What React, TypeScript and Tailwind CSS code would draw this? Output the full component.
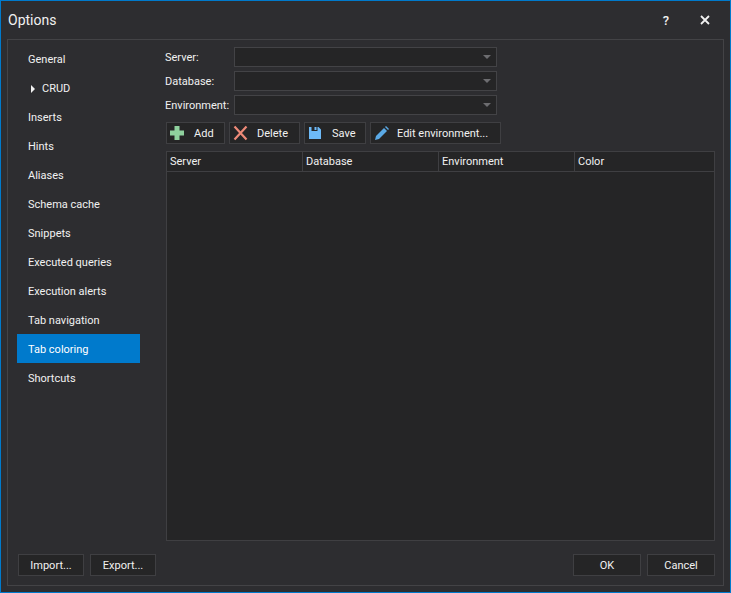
import React from 'react';

const navItems = ['General', 'CRUD', 'Inserts', 'Hints', 'Aliases', 'Schema cache', 'Snippets', 'Executed queries', 'Execution alerts', 'Tab navigation', 'Tab coloring', 'Shortcuts'];

const AddIcon = () => (
  <svg width="16" height="16" viewBox="0 0 16 16"><path d="M5.500 1h5v4.500h4.500v5h-4.500v4.500h-5v-4.500h-4.500v-5h4.500z" fill="#8fd19e" transform="translate(-1 0)" /></svg>
);
const DeleteIcon = () => (
  <svg width="16" height="16" viewBox="0 0 16 16"><path d="M1.500 1.500l12 13M13.500 1.500L1.500 14.500" stroke="#ee8a78" strokeWidth="2.200" fill="none" /></svg>
);
const SaveIcon = () => (
  <svg width="14" height="14" viewBox="0 0 14 14"><path d="M1 1h2.500v4h6v-4h1l2.500 2.500v9.500h-12z" fill="#6db9f7" /><path d="M6.500 1h2v3h-2z" fill="#6db9f7" /></svg>
);
const EditIcon = () => (
  <svg width="16" height="16" viewBox="0 0 16 16"><path d="M1 15l1-4 8-8 3 3-8 8z" fill="#5aa9e6" /><path d="M11 2l1-1 3 3-1 1z" fill="#5aa9e6" /></svg>
);

const Combo = ({ label }: { label: string }) => (
  <div className="flex items-center h-5">
    <span className="w-[69px] shrink-0">{label}</span>
    <div className="w-[263px] h-5 bg-[#252526] border border-[#434346] flex items-center justify-end pr-[5px]">
      <div className="w-0 h-0 border-l-[4px] border-r-[4px] border-t-[4px] border-l-transparent border-r-transparent border-t-[#6d6d70]" />
    </div>
  </div>
);

const ToolButton = ({ icon, label, w, gap }: { icon: React.ReactNode; label: string; w: string; gap: string }) => (
  <button className={`${w} h-[22px] bg-[#252526] border border-[#3f3f42] flex items-center pl-[3px] ${gap}`}>
    {icon}
    <span>{label}</span>
  </button>
);

const App: React.FC = () => {
  return (
    <div className="w-[731px] h-[593px] bg-[#2d2d30] border border-[#007acc] flex flex-col text-[#f1f1f1] text-[11px] leading-none font-['Roboto','Open_Sans',sans-serif]">
      {/* title */}
      <div className="h-[38px] shrink-0 flex items-center pl-[7px] pr-[20px]">
        <span className="text-[14px] flex-1">Options</span>
        <span className="text-[13px] font-medium mr-[31px]">?</span>
        <svg width="10" height="10" viewBox="0 0 10 10"><path d="M1 1l8 8M9 1l-8 8" stroke="#f1f1f1" strokeWidth="1.800" fill="none" /></svg>
      </div>

      <div className="w-[717px] h-[547px] ml-[6px] border border-[#434346] flex flex-col">
        <div className="flex flex-1 min-h-0">
          {/* nav */}
          <div className="w-[123px] ml-[9px] mt-[4px] shrink-0">
            {navItems.map(item => (
              <div key={item} className={`h-[29px] pt-[2px] flex items-center ${item === 'Tab coloring' ? 'bg-[#007acc] text-white' : ''} ${item === 'CRUD' ? 'pl-[14px]' : 'pl-[11px]'}`}>
                {item === 'CRUD' && <span className="w-0 h-0 mr-[7px] border-t-[4px] border-b-[4px] border-l-[4px] border-t-transparent border-b-transparent border-l-[#f1f1f1]" />}
                {item}
              </div>
            ))}
          </div>

          {/* content */}
          <div className="flex-1 ml-[25px] mr-[8px] pt-[7px] flex flex-col min-w-0">
            <div className="flex flex-col gap-1">
              <Combo label="Server:" />
              <Combo label="Database:" />
              <Combo label="Environment:" />
            </div>

            <div className="flex gap-1 mt-[7px] ml-px">
              <ToolButton icon={<AddIcon />} label="Add" w="w-[59px]" gap="gap-[8px]" />
              <ToolButton icon={<DeleteIcon />} label="Delete" w="w-[71px]" gap="gap-[8px]" />
              <ToolButton icon={<SaveIcon />} label="Save" w="w-[62px]" gap="gap-[10px]" />
              <ToolButton icon={<EditIcon />} label="Edit environment..." w="w-[131px]" gap="gap-[7px]" />
            </div>

            <div className="mt-[7px] ml-px h-[390px] border border-[#3f3f42] bg-[#252526]">
              <div className="h-[20px] flex border-b border-[#3f3f42]">
                {['Server', 'Database', 'Environment', 'Color'].map(col => (
                  <div key={col} className="w-[136px] pl-[3px] flex items-center border-r border-[#3f3f42] last:border-r-0">{col}</div>
                ))}
              </div>
            </div>
          </div>
        </div>

        {/* footer */}
        <div className="h-[22px] mt-[13px] mb-[9px] ml-[10px] mr-[8px] flex">
          <button className="w-[66px] h-[22px] bg-[#252526] border border-[#3f3f42]">Import...</button>
          <button className="w-[66px] h-[22px] ml-[6px] bg-[#252526] border border-[#3f3f42]">Export...</button>
          <button className="w-[68px] h-[22px] ml-auto bg-[#252526] border border-[#3f3f42]">OK</button>
          <button className="w-[68px] h-[22px] ml-[6px] bg-[#252526] border border-[#3f3f42]">Cancel</button>
        </div>
      </div>
    </div>
  );
};

export default App;
